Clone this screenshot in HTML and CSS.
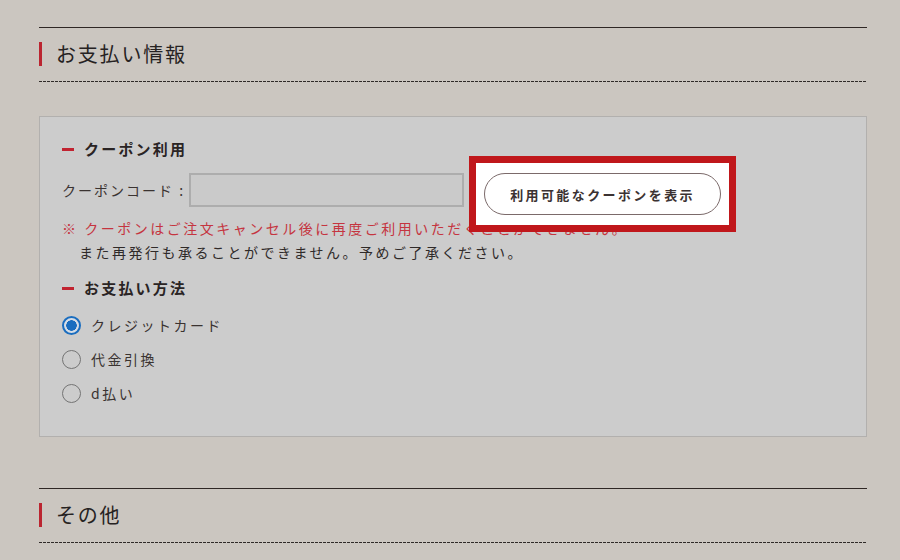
FILE: index.html
```html
<!DOCTYPE html>
<html lang="ja">
<head>
    <meta charset="UTF-8">
    <meta name="viewport" content="width=device-width, initial-scale=1.0">
    <title>お支払い情報</title>
    <link rel="stylesheet" href="styles.css">
</head>
<body>
    <main class="order-container">
        <section class="order-section">
            <h2 class="section-title">お支払い情報</h2>
            <div class="panel">
                <h3 class="sub-title">クーポン利用</h3>
                <div class="coupon-row">
                    <label for="couponCode">クーポンコード :</label>
                    <input type="text" id="couponCode" name="coupon">
                    <span class="highlight">
                        <button type="button" class="coupon-button">利用可能なクーポンを表示</button>
                    </span>
                </div>
                <p class="note">
                    <span class="note-red">※ クーポンはご注文キャンセル後に再度ご利用いただくことができません。</span>
                    <span class="note-sub">また再発行も承ることができません。予めご了承ください。</span>
                </p>

                <h3 class="sub-title">お支払い方法</h3>
                <div class="pay-list">
                    <label class="pay-item"><input type="radio" name="payment" checked> クレジットカード</label>
                    <label class="pay-item"><input type="radio" name="payment"> 代金引換</label>
                    <label class="pay-item"><input type="radio" name="payment"> d払い</label>
                </div>
            </div>
        </section>

        <section class="order-section other">
            <h2 class="section-title">その他</h2>
        </section>
    </main>
</body>
</html>
```

FILE: styles.css
```css
* {
    margin: 0;
    padding: 0;
    box-sizing: border-box;
    font-family: "Noto Sans CJK JP", "Noto Sans", sans-serif;
}
body {
    background-color: #cbc6c0;
    color: #332c2b;
}
.order-container {
    width: 828px;
    margin-left: 39px;
    padding-top: 27px;
}
.order-section {
    border-top: 1px solid #2f2725;
}
.order-section.other {
    margin-top: 51px;
}
.section-title {
    margin: 14px 0 0;
    padding: 0 0 16px;
    font-size: 20px;
    font-weight: normal;
    letter-spacing: 1.8px;
    line-height: 24px;
    color: #262222;
    background-image: repeating-linear-gradient(to right, #2f2a28 0 3px, transparent 3px 4px);
    background-size: 100% 1px;
    background-repeat: no-repeat;
    background-position: left bottom;
}
.section-title::before {
    content: "";
    display: inline-block;
    width: 3px;
    height: 24px;
    background: #bb2530;
    vertical-align: top;
    margin-right: 14px;
}
.panel {
    margin-top: 34px;
    background: #cccccc;
    border: 1px solid #b2b0ae;
    padding: 21px 22px 26px;
}
.sub-title {
    display: flex;
    align-items: center;
    font-size: 15px;
    line-height: 22px;
    letter-spacing: 2.2px;
    font-weight: bold;
    color: #2a2424;
}
.sub-title::before {
    content: "";
    width: 12px;
    height: 3px;
    background: #c12330;
    margin-right: 10px;
}
.coupon-row {
    display: flex;
    align-items: flex-start;
    margin-top: 13px;
}
.coupon-row label {
    font-size: 14px;
    line-height: 34px;
    letter-spacing: 2px;
    margin-right: 4px;
    color: #3a3331;
}
.coupon-row input {
    width: 275px;
    height: 34px;
    background: #cacaca;
    border: 2px solid #adadad;
}
.highlight {
    position: relative;
    z-index: 1;
    margin-left: 20px;
}
.highlight::before {
    content: "";
    position: absolute;
    top: -17px;
    bottom: -17px;
    left: -15px;
    right: -15px;
    background: white;
    border: 7px solid #c0171b;
    z-index: -1;
}
.coupon-button {
    display: block;
    width: 237px;
    height: 42px;
    border: 1px solid #7b6a6a;
    border-radius: 21px;
    background: white;
    font-size: 13px;
    font-weight: bold;
    letter-spacing: 2.4px;
    color: #3b3232;
    cursor: pointer;
}
.note {
    margin-top: 1px;
    font-size: 14px;
    line-height: 24px;
    letter-spacing: 2.5px;
}
.note span {
    display: block;
}
.note-red {
    color: #c5343f;
}
.note-sub {
    padding-left: 17px;
    color: #2f2a29;
}
.note + .sub-title {
    margin-top: 13px;
}
.pay-list {
    margin-top: 9px;
}
.pay-item {
    display: flex;
    align-items: center;
    height: 34px;
    font-size: 14px;
    letter-spacing: 2.5px;
    color: #3a3331;
}
.pay-item input {
    appearance: none;
    width: 19px;
    height: 19px;
    border: 1.5px solid #747474;
    border-radius: 50%;
    margin-right: 10px;
    background: transparent;
}
.pay-item input:checked {
    border: 2px solid #1a6dbf;
    background: radial-gradient(circle, #1a6dbf 0 5px, #d6dde6 5.5px);
}
```
